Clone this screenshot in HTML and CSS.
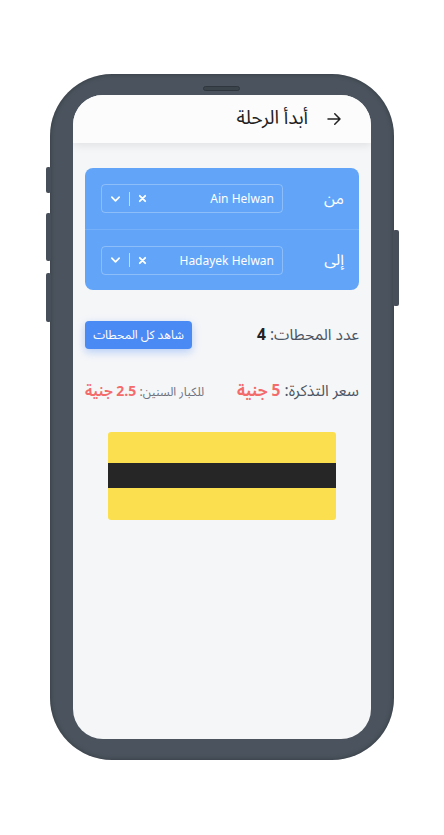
FILE: index.html
```
<!DOCTYPE html>
<html lang="ar">
<head>
<meta charset="utf-8">
<link rel="stylesheet" href="styles.css">
</head>
<body>
<div class="stage">
  <div class="phone">
    <span class="btn btn-l1"></span>
    <span class="btn btn-l2"></span>
    <span class="btn btn-l3"></span>
    <span class="btn btn-r1"></span>
    <span class="speaker"></span>
    <div class="screen">
      <header class="top">
        <svg class="arrow" width="18" height="18" viewBox="0 0 24 24" fill="none" stroke="#222" stroke-width="2" stroke-linecap="round" stroke-linejoin="round"><path d="M4 12h16M13 5l7 7-7 7"/></svg>
        <span class="title">أبدأ الرحلة</span>
      </header>
      <main class="content">
        <section class="route">
          <div class="row">
            <span class="lbl">من</span>
            <div class="select">
              <span class="val">Ain Helwan</span>
              <span class="ctrl">
                <svg width="9" height="9" viewBox="0 0 10 10" stroke="#fff" stroke-width="2" stroke-linecap="round"><path d="M2 2l6 6M8 2l-6 6"/></svg>
                <span class="sep"></span>
                <svg width="11" height="8" viewBox="0 0 12 8" fill="none" stroke="#fff" stroke-width="1.8" stroke-linecap="round" stroke-linejoin="round"><path d="M2 2l4 4 4-4"/></svg>
              </span>
            </div>
          </div>
          <div class="row">
            <span class="lbl">إلى</span>
            <div class="select">
              <span class="val">Hadayek Helwan</span>
              <span class="ctrl">
                <svg width="9" height="9" viewBox="0 0 10 10" stroke="#fff" stroke-width="2" stroke-linecap="round"><path d="M2 2l6 6M8 2l-6 6"/></svg>
                <span class="sep"></span>
                <svg width="11" height="8" viewBox="0 0 12 8" fill="none" stroke="#fff" stroke-width="1.8" stroke-linecap="round" stroke-linejoin="round"><path d="M2 2l4 4 4-4"/></svg>
              </span>
            </div>
          </div>
        </section>
        <div class="info count">
          <span class="txt">عدد المحطات: <b class="num">4</b></span>
          <button class="see">شاهد كل المحطات</button>
        </div>
        <div class="info price">
          <span class="txt">سعر التذكرة: <b class="red">5 جنية</b></span>
          <span class="small">للكبار السنين: <b class="red">2.5 جنية</b></span>
        </div>
        <div class="line">
          <div class="band"></div>
        </div>
      </main>
    </div>
  </div>
</div>
</body>
</html>
```
FILE: styles.css
```
* { box-sizing: border-box; }
html, body { margin: 0; padding: 0; background: #fff; }
body { font-family: "Noto Sans Arabic", "Noto Sans", "DejaVu Sans", sans-serif; }
.stage { width: 444px; height: 835px; padding: 74px 0 0 50px; }
.phone {
  position: relative;
  width: 344px; height: 686px;
  background: #4b545e;
  border-radius: 62px;
  padding: 21px 23px;
  box-shadow: inset 0 0 5px rgba(0,0,0,0.35);
}
.btn { position: absolute; background: #47505a; border-radius: 2px; }
.btn-l1 { left: -4px; top: 93px; width: 5px; height: 26px; }
.btn-l2 { left: -4px; top: 139px; width: 5px; height: 48px; }
.btn-l3 { left: -4px; top: 199px; width: 5px; height: 49px; }
.btn-r1 { right: -5px; top: 156px; width: 6px; height: 76px; }
.speaker {
  position: absolute; left: 153px; top: 12px;
  width: 37px; height: 5px; border-radius: 3px;
  background: #3b434b; border: 1px solid #2f363d;
}
.screen {
  width: 298px; height: 644px;
  background: #f5f6f8;
  border-radius: 30px;
  overflow: hidden;
  display: flex; flex-direction: column;
}
.top {
  height: 48px; flex: none;
  background: #fcfcfc;
  box-shadow: 0 3px 8px rgba(0,0,0,0.08);
  display: flex; align-items: center; justify-content: flex-start;
  direction: rtl;
  padding: 0 28px 0 0;
  gap: 17px;
}
.title { font-size: 19px; color: #222; line-height: 1; margin-top: -2px; }
.arrow { display: block; }
.content { padding: 25px 12px 0; display: flex; flex-direction: column; }
.route {
  background: #62a5f8;
  border-radius: 8px;
  display: flex; flex-direction: column;
}
.row {
  height: 61px;
  display: flex; align-items: center;
  direction: rtl;
  padding: 0 15px 0 16px;
}
.row + .row { border-top: 1px solid rgba(255,255,255,0.12); height: 61px; }
.lbl { flex: 1; color: #fff; font-size: 16px; }
.select {
  width: 182px; height: 29px;
  border: 1px solid rgba(255,255,255,0.28);
  border-radius: 4px;
  display: flex; align-items: center; justify-content: space-between;
  padding: 0 8px 0 8px;
  direction: ltr;
  flex-direction: row-reverse;
}
.val { color: #fff; font-size: 12px; font-family: "Noto Sans", sans-serif; }
.ctrl { display: flex; flex-direction: row-reverse; align-items: center; gap: 8px; }
.ctrl svg { display: block; }
.sep { width: 1px; height: 14px; background: rgba(255,255,255,0.6); }
.info { display: flex; align-items: center; justify-content: space-between; direction: rtl; }
.count { margin-top: 31px; height: 28px; }
.txt { font-size: 15.5px; color: #4b5563; }
.num { color: #222; font-weight: 700; }
.see {
  width: 107px; height: 28px;
  background: #4a8af4;
  color: #fff; border: none; border-radius: 4px;
  font-family: inherit; font-size: 12px;
  box-shadow: 0 3px 8px rgba(59,130,246,0.35);
  padding: 0;
}
.price { margin-top: 28px; height: 28px; }
.red { color: #f36b6b; font-weight: 700; }
.small { font-size: 12px; color: #6b7280; }
.small .red { font-size: 14px; }
.line {
  align-self: center;
  margin-top: 27px;
  width: 228px; height: 88px;
  background: #fbdf4f;
  border-radius: 3px;
  padding-top: 31px;
}
.band { height: 25px; background: #262626; }
```
